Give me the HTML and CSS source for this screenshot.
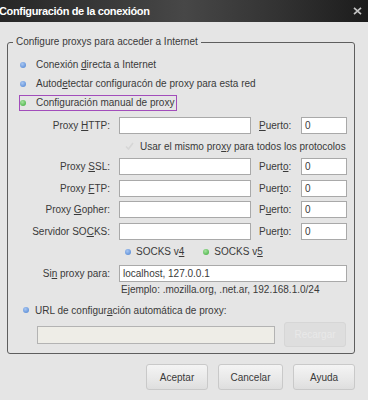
FILE: index.html
```html
<!DOCTYPE html>
<html lang="es">
<head>
<meta charset="utf-8">
<title>Configuración de la conexión</title>
<link rel="stylesheet" href="styles.css">
</head>
<body>
<div class="titlebar">
  <span class="title">Configuración de la conexióon</span>
  <svg class="close" width="9" height="8" viewBox="0 0 9 8"><path d="M1 0.8 L8 7.2 M8 0.8 L1 7.2" stroke="#c4c4c4" stroke-width="1.7" fill="none"/></svg>
</div>
<div class="content">
  <fieldset class="group">
    <legend class="legend">Configure proxys para acceder a Internet</legend>
    <div class="radio-row first"><span class="radio"><i class="dot blue"></i><span>Conexión <u>d</u>irecta a Internet</span></span></div>
    <div class="radio-row"><span class="radio"><i class="dot blue"></i><span>Autod<u>e</u>tectar configuracón de proxy para esta red</span></span></div>
    <div class="radio-row"><span class="radio focus"><i class="dot green"></i><span>Configuración manual de proxy</span></span></div>

    <div class="proxy-grid">
      <label class="lbl r-http">Proxy <u>H</u>TTP:</label>
      <div class="field r-http"></div>
      <label class="plbl r-http"><u>P</u>uerto:</label>
      <div class="field port r-http">0</div>

      <div class="same r-same"><svg class="check" width="9" height="8" viewBox="0 0 9 8"><path d="M1 4.5 L3.5 7 L8 1" stroke="#d6d6d6" stroke-width="1.6" fill="none"/></svg><span>Usar el mismo pro<u>x</u>y para todos los protocolos</span></div>

      <label class="lbl r-ssl">Proxy <u>S</u>SL:</label>
      <div class="field r-ssl"></div>
      <label class="plbl r-ssl">Puert<u>o</u>:</label>
      <div class="field port r-ssl">0</div>

      <label class="lbl r-ftp">Proxy <u>F</u>TP:</label>
      <div class="field r-ftp"></div>
      <label class="plbl r-ftp">Puer<u>t</u>o:</label>
      <div class="field port r-ftp">0</div>

      <label class="lbl r-gopher">Proxy <u>G</u>opher:</label>
      <div class="field r-gopher"></div>
      <label class="plbl r-gopher">P<u>u</u>erto:</label>
      <div class="field port r-gopher">0</div>

      <label class="lbl r-socks">Servidor SO<u>C</u>KS:</label>
      <div class="field r-socks"></div>
      <label class="plbl r-socks">Puer<u>t</u>o:</label>
      <div class="field port r-socks">0</div>

      <div class="socks r-ver">
        <span class="opt"><i class="dot blue"></i><span>SOCKS v<u>4</u></span></span>
        <span class="opt"><i class="dot green"></i><span>SOCKS v<u>5</u></span></span>
      </div>

      <label class="lbl r-noproxy">Si<u>n</u> proxy para:</label>
      <div class="field wide r-noproxy">localhost, 127.0.0.1</div>

      <div class="example r-example">Ejemplo: .mozilla.org, .net.ar, 192.168.1.0/24</div>
    </div>

    <div class="radio-row url"><span class="radio"><i class="dot blue"></i><span>URL de configur<u>a</u>ción automática de proxy:</span></span></div>
    <div class="url-row">
      <div class="field disabled"></div>
      <div class="btn reload">Recargar</div>
    </div>
  </fieldset>

  <div class="buttons">
    <div class="btn">Aceptar</div>
    <div class="btn btn-wide">Cancelar</div>
    <div class="btn">Ayuda</div>
  </div>
</div>
</body>
</html>
```

FILE: styles.css
```css
* { box-sizing: border-box; }

html, body {
  margin: 0;
  padding: 0;
}

body {
  width: 368px;
  height: 400px;
  overflow: hidden;
  background: #e5e5e5;
  font-family: "Liberation Sans", Arial, sans-serif;
  font-size: 10px;
  color: #3a3a3a;
}

u { text-decoration: underline; text-underline-offset: 1px; }

.titlebar {
  height: 22px;
  display: flex;
  align-items: center;
  justify-content: space-between;
  padding: 0 6px 0 0;
  background: linear-gradient(to right, #262626 0%, #3a3a3a 30%, #474747 50%, #333 75%, #1c1c1c 100%);
}

.title {
  color: #fff;
  font-weight: bold;
  font-size: 11px;
  letter-spacing: -0.35px;
  margin-left: -1px;
}

.close { display: block; margin-top: -1px; }

.content {
  padding: 14px 13px 0 7px;
}

.group {
  margin: 0;
  width: 348px;
  border: 1px solid #5e5e5e;
  border-radius: 3px;
  padding: 7px 7px 6px 1px;
  min-width: 0;
}

.legend {
  margin-left: 4px;
  padding: 0 3px;
  line-height: 12px;
  font-size: 10px;
  color: #3a3a3a;
}

.radio-row {
  height: 19px;
  display: flex;
  align-items: center;
  padding-left: 10px;
}

.radio {
  display: flex;
  align-items: center;
  gap: 10px;
  height: 16px;
  border: 1px solid transparent;
  padding-right: 2px;
}

.radio.focus {
  border-color: #a24dbb;
}

.dot {
  display: inline-block;
  width: 6px;
  height: 6px;
  border-radius: 50%;
  flex: none;
}

.dot.blue { background: radial-gradient(circle at 40% 35%, #a9c7f2, #5d8fd8 80%); }
.dot.green { background: radial-gradient(circle at 40% 35%, #a6e4a0, #4fb54c 80%); }

.proxy-grid {
  display: grid;
  grid-template-columns: 102px 132px 34px 46px;
  column-gap: 8px;
  grid-template-rows: 17px 24px 22px 21px 22px 17px 25px 17px 16px;
  align-items: start;
  margin-top: 5px;
}

.lbl {
  grid-column: 1;
  text-align: right;
  line-height: 17px;
  padding-right: 1px;
  white-space: nowrap;
}

.plbl {
  grid-column: 3;
  line-height: 17px;
  white-space: nowrap;
}

.field {
  height: 17px;
  background: #fff;
  border: 1px solid #a9a9a9;
  line-height: 15px;
  padding-left: 3px;
  white-space: nowrap;
}

.proxy-grid .field { grid-column: 2; }
.proxy-grid .field.port { grid-column: 4; }
.proxy-grid .field.wide { grid-column: 2 / 5; }

.r-http { grid-row: 1; }
.r-same { grid-row: 2; }
.r-ssl { grid-row: 3; }
.r-ftp { grid-row: 4; }
.r-gopher { grid-row: 5; }
.r-socks { grid-row: 6; }
.r-ver { grid-row: 7; }
.r-noproxy { grid-row: 8; }
.r-example { grid-row: 9; }

.same {
  grid-column: 2 / 5;
  height: 24px;
  display: flex;
  align-items: center;
  padding-left: 6px;
  gap: 6px;
  white-space: nowrap;
}

.check { display: block; }

.socks {
  grid-column: 2 / 5;
  height: 25px;
  display: flex;
  align-items: center;
  padding-left: 6px;
  gap: 19px;
  margin-top: -1px;
}

.opt {
  display: flex;
  align-items: center;
  gap: 5px;
}

.example {
  grid-column: 2 / 5;
  line-height: 16px;
  padding-left: 2px;
}

.radio-row.url {
  height: 20px;
  margin-top: 2px;
  padding-left: 13px;
}

.radio-row.url .radio { gap: 6px; }

.url-row {
  display: flex;
  align-items: center;
  height: 25px;
  margin-top: 2px;
  padding-left: 28px;
  gap: 9px;
}

.field.disabled {
  width: 238px;
  height: 18px;
  background: #eeede7;
  border-color: #b3b3b3;
}

.btn {
  width: 62px;
  height: 26px;
  display: flex;
  align-items: center;
  justify-content: center;
  border: 1px solid #c9c9c9;
  border-radius: 3px;
  background: linear-gradient(#f4f4f4, #e9e9e9 55%, #dedede);
  color: #3a3a3a;
}

.btn.reload {
  height: 25px;
  background: #dedede;
  border-color: #d6d6d6;
  color: #e9e9e9;
}

.btn-wide { width: 65px; }

.buttons {
  display: flex;
  justify-content: flex-end;
  gap: 10px;
  margin-top: 10px;
}
```
